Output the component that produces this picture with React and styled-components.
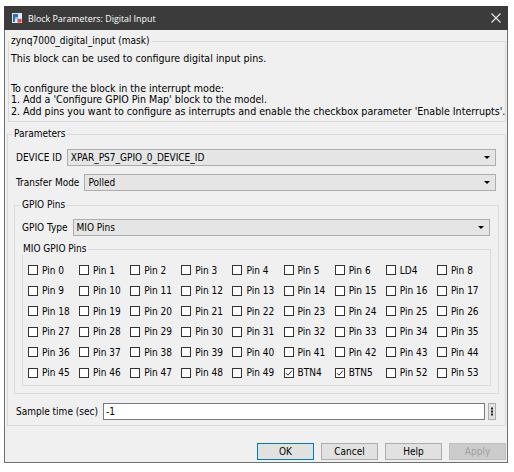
import React from 'react';
import styled, { createGlobalStyle } from 'styled-components';

const GlobalStyle = createGlobalStyle`
  html, body { margin: 0; padding: 0; background: #ffffff; }
  body {
    font-family: "DejaVu Sans Condensed", "DejaVu Sans", sans-serif;
    font-stretch: condensed;
    font-size: 10px;
    color: #000;
  }
  * { box-sizing: border-box; }
`;

const Page = styled.div`
  padding: 6px 0 0 4px;
`;

const Window = styled.div`
  width: 504px;
  height: 457px;
  display: flex;
  flex-direction: column;
`;

const TitleBar = styled.div`
  height: 24px;
  flex: none;
  background: #3b3b3b;
  color: #ffffff;
  display: flex;
  align-items: center;
  gap: 6px;
  padding: 0 7px 0 8px;
  font-family: "Open Sans", "Noto Sans", sans-serif;
  font-stretch: normal;
  font-size: 8.9px;
`;

const TitleText = styled.span`
  flex: 1;
`;

const Body = styled.div`
  flex: 1;
  display: flex;
  flex-direction: column;
  background: #f0f0f0;
  border: 1px solid #6f6f6f;
  border-top: none;
  padding: 5px 1px 2px 2px;
`;

const Group = styled.fieldset`
  margin: ${p => p.$margin || '0'};
  padding: ${p => p.$padding || '0'};
  border: 1px solid #dadada;
  min-width: 0;
  display: flex;
  flex-direction: column;
`;

const Legend = styled.legend`
  padding: 0 2px;
  margin-left: -2px;
  line-height: 12px;
  height: 12px;
`;

const MaskText = styled.p`
  margin: ${p => p.$margin || '0'};
  font-size: 10.6px;
  line-height: 11.5px;
  white-space: nowrap;
`;

const Row = styled.div`
  display: flex;
  align-items: center;
  gap: 5px;
  height: 17px;
  margin: ${p => p.$margin || '0'};
  padding-left: ${p => p.$indent || 0}px;
`;

const Label = styled.span`
  white-space: nowrap;
`;

const Combo = styled.div`
  flex: 1;
  height: 17px;
  display: flex;
  align-items: center;
  justify-content: space-between;
  background: #e5e5e5;
  border: 1px solid #adadad;
  padding: 0 5px 0 3px;
`;

const Arrow = styled.span`
  width: 0;
  height: 0;
  border-left: 3px solid transparent;
  border-right: 3px solid transparent;
  border-top: 3px solid #000;
`;

const PinGrid = styled.div`
  display: grid;
  grid-template-columns: repeat(9, 1fr);
  grid-auto-rows: 14px;
  row-gap: 6.6px;
  padding: 8px 2px 5px 5px;
`;

const Pin = styled.label`
  display: flex;
  align-items: center;
  gap: 4px;
  white-space: nowrap;
`;

const Box = styled.span`
  width: 10px;
  height: 10px;
  flex: none;
  border: 1px solid #333333;
  background: #ffffff;
  display: flex;
  align-items: center;
  justify-content: center;
`;

const TextInput = styled.div`
  flex: 1;
  height: 17px;
  background: #ffffff;
  border: 1px solid #7a7a7a;
  display: flex;
  align-items: center;
  padding-left: 2px;
`;

const DotsButton = styled.div`
  width: 8px;
  height: 17px;
  margin-left: -2px;
  background: #e1e1e1;
  border: 1px solid #adadad;
  display: flex;
  align-items: center;
  justify-content: center;
`;

const ButtonRow = styled.div`
  margin-top: auto;
  display: flex;
  justify-content: flex-end;
  gap: 7px;
`;

const Button = styled.div`
  width: 57px;
  height: 17px;
  display: flex;
  align-items: center;
  justify-content: center;
  background: ${p => (p.$disabled ? '#cccccc' : '#e1e1e1')};
  color: ${p => (p.$disabled ? '#a0a0a0' : '#000')};
  border: 1px solid ${p => (p.$default ? '#0078d7' : p.$disabled ? '#bfbfbf' : '#adadad')};
`;

const AppIcon = () => (
  <svg width="10" height="10" viewBox="0 0 10 10">
    <rect x="0" y="0" width="10" height="10" fill="#dfe9f5" />
    <path d="M1 1h5v3H3v5H1z" fill="#2f6fbf" />
    <path d="M3 4h3v2H3z" fill="#8fb8e6" />
    <rect x="5.5" y="6" width="4" height="3.5" fill="#e04a2a" />
  </svg>
);

const CloseIcon = () => (
  <svg width="10" height="10" viewBox="0 0 10 10">
    <path d="M0.5 0.5L9.5 9.5M9.5 0.5L0.5 9.5" stroke="#e8e8e8" strokeWidth="1.1" />
  </svg>
);

const Tick = () => (
  <svg width="8" height="8" viewBox="0 0 8 8">
    <path d="M1 4.2L3 6.2L7 1.6" stroke="#222" strokeWidth="1" fill="none" />
  </svg>
);

const Dots = () => (
  <svg width="2" height="9" viewBox="0 0 2 9">
    <rect x="0" y="0.5" width="2" height="2" fill="#222" />
    <rect x="0" y="3.5" width="2" height="2" fill="#222" />
    <rect x="0" y="6.5" width="2" height="2" fill="#222" />
  </svg>
);

const special = { 7: 'LD4', 50: 'BTN4', 51: 'BTN5' };
const checked = new Set([50, 51]);
const pins = Array.from({ length: 54 }, (_, i) => ({
  id: i,
  label: special[i] || `Pin ${i}`,
  checked: checked.has(i),
}));

export default function App() {
  return (
    <Page>
      <GlobalStyle />
      <Window>
        <TitleBar>
          <AppIcon />
          <TitleText>Block Parameters: Digital Input</TitleText>
          <CloseIcon />
        </TitleBar>
        <Body>
          <Group $margin="0 0 0 1px" $padding="6px 0 4px 2px">
            <Legend>zynq7000_digital_input (mask)</Legend>
            <MaskText>This block can be used to configure digital input pins.</MaskText>
            <MaskText $margin="18px 0 0 0">
              To configure the block in the interrupt mode:
              <br />
              1. Add a 'Configure GPIO Pin Map' block to the model.
              <br />
              2. Add pins you want to configure as interrupts and enable the checkbox parameter 'Enable Interrupts'.
            </MaskText>
          </Group>

          <Group $margin="6px 0 0 0" $padding="9px 0 5px 6px">
            <Legend>Parameters</Legend>
            <Row $margin="0 9px 0 0" $indent={2}>
              <Label>DEVICE ID</Label>
              <Combo>
                <span>XPAR_PS7_GPIO_0_DEVICE_ID</span>
                <Arrow />
              </Combo>
            </Row>
            <Row $margin="8px 9px 0 0" $indent={2}>
              <Label>Transfer Mode</Label>
              <Combo>
                <span>Polled</span>
                <Arrow />
              </Combo>
            </Row>

            <Group $margin="8px 6px 0 0" $padding="8px 0 7px 7px">
              <Legend>GPIO Pins</Legend>
              <Row $margin="0 8px 0 0">
                <Label>GPIO Type</Label>
                <Combo>
                  <span>MIO Pins</span>
                  <Arrow />
                </Combo>
              </Row>
              <Group $margin="7px 7px 0 0" $padding="0">
                <Legend>MIO GPIO Pins</Legend>
                <PinGrid>
                  {pins.map(p => (
                    <Pin key={p.id}>
                      <Box>{p.checked && <Tick />}</Box>
                      <span>{p.label}</span>
                    </Pin>
                  ))}
                </PinGrid>
              </Group>
            </Group>

            <Row $margin="9px 9px 0 0" $indent={2}>
              <Label>Sample time (sec)</Label>
              <TextInput>-1</TextInput>
              <DotsButton>
                <Dots />
              </DotsButton>
            </Row>
          </Group>

          <ButtonRow>
            <Button $default>OK</Button>
            <Button>Cancel</Button>
            <Button>Help</Button>
            <Button $disabled>Apply</Button>
          </ButtonRow>
        </Body>
      </Window>
    </Page>
  );
}
